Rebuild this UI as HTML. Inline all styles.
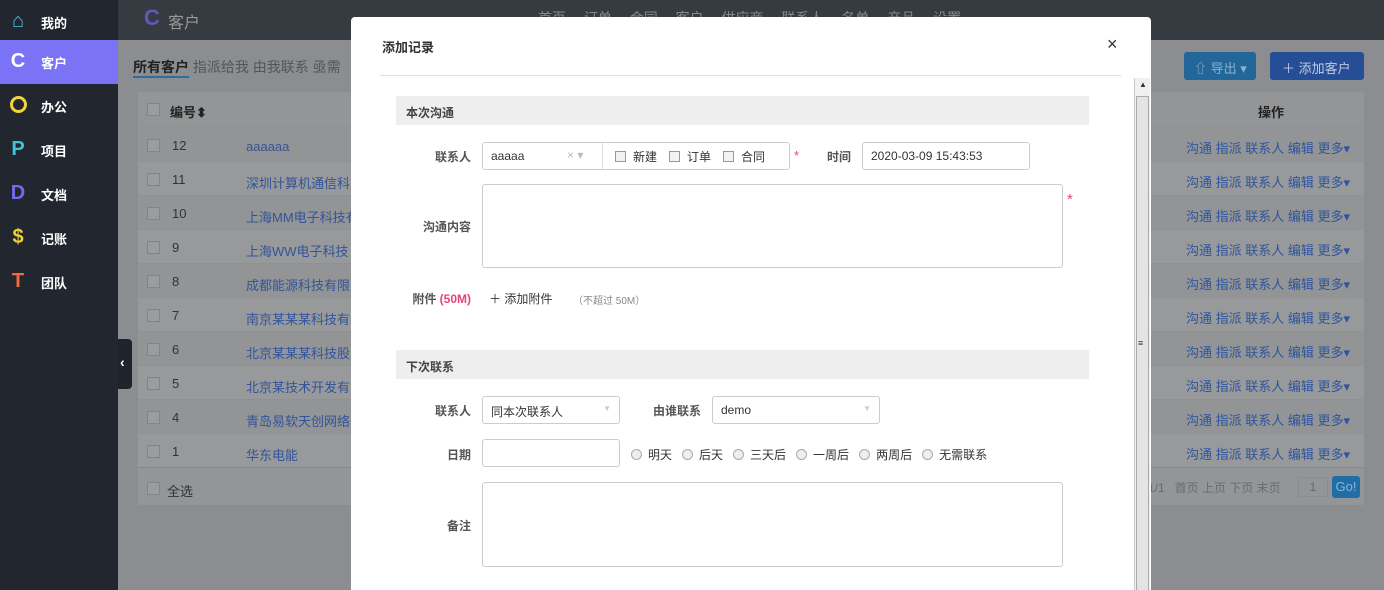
<!DOCTYPE html>
<html><head><meta charset="utf-8"><style>
*{box-sizing:border-box;margin:0;padding:0}
html,body{width:1384px;height:590px;overflow:hidden}
body{position:relative;font-family:"Liberation Sans","Noto Sans CJK SC",sans-serif;font-size:13px;color:#333;background:#8b8d90}
.a{position:absolute}
.side{left:0;top:0;width:118px;height:590px;background:#22262e}
.si{position:absolute;left:0;width:118px;height:44px;color:#fff;font-weight:bold;font-size:13px}
.si span.ic{position:absolute;left:8px;top:10px;font-size:20px;font-weight:bold;width:20px;text-align:center;line-height:22px}
.si span.t{position:absolute;left:41px;top:13px}
.top{left:118px;top:0;width:1266px;height:40px;background:#363b42}
.tbl{left:138px;top:92px;width:1226px;height:413px;background:#97999b;border-radius:3px}
.row{position:absolute;left:0;width:1226px;height:34px;border-top:1px solid #8f9193}
.cb{position:absolute;width:13px;height:13px;border:1px solid #828486;background:#9a9c9e}
.lk{color:#33549a}
.act{position:absolute;right:14px;color:#2f559e;font-size:13px}
.modal{left:351px;top:17px;width:800px;height:573px;background:#fff;border-radius:4px 4px 0 0;overflow:hidden}
.sec{position:absolute;left:45px;width:693px;height:29px;background:#eeeeee;font-weight:bold;font-size:12px;color:#444;padding:8px 10px}
.lbl{position:absolute;font-weight:bold;font-size:12px;color:#555;text-align:right}
.inp{position:absolute;border:1px solid #ccc;border-radius:3px;background:#fff;font-size:12px;color:#333}
.rad{display:inline-block;width:11px;height:11px;border:1px solid #aaa;border-radius:50%;background:#eee;vertical-align:-1px;margin:0 6px 0 10px}
.chk{display:inline-block;width:11px;height:11px;border:1px solid #999;background:#f2f2f2;vertical-align:-1px;margin:0 7px 0 12px}
</style></head><body>
<div class="a side">
<div class="si" style="top:0"><span class="ic" style="color:#4cc2e6">&#8962;</span><span class="t">我的</span></div>
<div class="si" style="top:40px;background:#7a73f6"><span class="ic">C</span><span class="t">客户</span></div>
<div class="si" style="top:84px"><span class="ic" style="top:12px;left:10px;width:17px;height:17px;border:3px solid #f0d43a;border-radius:50%"></span><span class="t">办公</span></div>
<div class="si" style="top:128px"><span class="ic" style="color:#3ec4d8">P</span><span class="t">项目</span></div>
<div class="si" style="top:172px"><span class="ic" style="color:#6e6cf0">D</span><span class="t">文档</span></div>
<div class="si" style="top:216px"><span class="ic" style="color:#f0cf3a">$</span><span class="t">记账</span></div>
<div class="si" style="top:260px"><span class="ic" style="color:#f06a3a">T</span><span class="t">团队</span></div>
</div>
<div class="a" style="left:118px;top:339px;width:14px;height:50px;background:#1f232a;border-radius:0 4px 4px 0;color:#fff;font-size:14px;font-weight:bold;padding:15px 2px">&lsaquo;</div>
<div class="a top"><span class="a" style="left:26px;top:5px;font-size:22px;color:#5d5ab8;font-weight:bold">C</span><span class="a" style="left:50px;top:9px;font-size:16px;color:#999">客户</span>
<span class="a" style="left:420px;top:8px;color:#888;font-size:14px;word-spacing:14px">首页 订单 合同 客户 供应商 联系人 名单 产品 设置</span></div>
<div class="a" style="left:133px;top:57px;font-size:14px;color:#555"><b style="color:#222">所有客户</b> 指派给我 由我联系 亟需</div>
<div class="a" style="left:133px;top:76px;width:56px;height:2px;background:#2e6d9e"></div>
<div class="a" style="left:1184px;top:52px;width:72px;height:28px;background:#22669a;border-radius:3px;color:#8fb0cc;font-size:13px;padding:6px 10px;white-space:nowrap">⇧ 导出 ▾</div>
<div class="a" style="left:1270px;top:52px;width:94px;height:28px;background:#254e96;border-radius:3px;color:#c0cce2;font-size:13px;padding:6px 12px;white-space:nowrap">＋ 添加客户</div>
<div class="a tbl">
<div class="row" style="top:0;height:35px;border:0;background:#939597"><span class="cb" style="left:9px;top:11px"></span><b class="a" style="left:32px;top:10px;color:#222;font-size:13px">编号⬍</b><b class="a" style="right:80px;top:10px;color:#222">操作</b></div>
</div>
<div class="a" style="left:138px;top:127px">
<div class="row" style="top:0;background:#929496"><span class="cb" style="left:9px;top:11px"></span><span class="a" style="left:34px;top:10px">12</span><span class="a lk" style="left:108px;top:11px">aaaaaa</span><span class="act" style="top:10px">沟通 指派 联系人 编辑 更多▾</span></div>
<div class="row" style="top:34px;background:#97999b"><span class="cb" style="left:9px;top:11px"></span><span class="a" style="left:34px;top:10px">11</span><span class="a lk" style="left:108px;top:11px">深圳计算机通信科</span><span class="act" style="top:10px">沟通 指派 联系人 编辑 更多▾</span></div>
<div class="row" style="top:68px;background:#929496"><span class="cb" style="left:9px;top:11px"></span><span class="a" style="left:34px;top:10px">10</span><span class="a lk" style="left:108px;top:11px">上海MM电子科技有</span><span class="act" style="top:10px">沟通 指派 联系人 编辑 更多▾</span></div>
<div class="row" style="top:102px;background:#97999b"><span class="cb" style="left:9px;top:11px"></span><span class="a" style="left:34px;top:10px">9</span><span class="a lk" style="left:108px;top:11px">上海WW电子科技</span><span class="act" style="top:10px">沟通 指派 联系人 编辑 更多▾</span></div>
<div class="row" style="top:136px;background:#929496"><span class="cb" style="left:9px;top:11px"></span><span class="a" style="left:34px;top:10px">8</span><span class="a lk" style="left:108px;top:11px">成都能源科技有限</span><span class="act" style="top:10px">沟通 指派 联系人 编辑 更多▾</span></div>
<div class="row" style="top:170px;background:#97999b"><span class="cb" style="left:9px;top:11px"></span><span class="a" style="left:34px;top:10px">7</span><span class="a lk" style="left:108px;top:11px">南京某某某科技有</span><span class="act" style="top:10px">沟通 指派 联系人 编辑 更多▾</span></div>
<div class="row" style="top:204px;background:#929496"><span class="cb" style="left:9px;top:11px"></span><span class="a" style="left:34px;top:10px">6</span><span class="a lk" style="left:108px;top:11px">北京某某某科技股</span><span class="act" style="top:10px">沟通 指派 联系人 编辑 更多▾</span></div>
<div class="row" style="top:238px;background:#97999b"><span class="cb" style="left:9px;top:11px"></span><span class="a" style="left:34px;top:10px">5</span><span class="a lk" style="left:108px;top:11px">北京某技术开发有</span><span class="act" style="top:10px">沟通 指派 联系人 编辑 更多▾</span></div>
<div class="row" style="top:272px;background:#929496"><span class="cb" style="left:9px;top:11px"></span><span class="a" style="left:34px;top:10px">4</span><span class="a lk" style="left:108px;top:11px">青岛易软天创网络</span><span class="act" style="top:10px">沟通 指派 联系人 编辑 更多▾</span></div>
<div class="row" style="top:306px;background:#97999b"><span class="cb" style="left:9px;top:11px"></span><span class="a" style="left:34px;top:10px">1</span><span class="a lk" style="left:108px;top:11px">华东电能</span><span class="act" style="top:10px">沟通 指派 联系人 编辑 更多▾</span></div>
<div class="row" style="top:340px;height:38px;background:#939597;border-top:1px solid #85878a"><span class="cb" style="left:9px;top:14px"></span><span class="a" style="left:29px;top:13px">全选</span>
<span class="a" style="left:1010px;top:11px;color:#6a6c6e;font-size:12px">1/1 &nbsp;&nbsp;首页 上页 下页 末页</span><span class="a" style="left:1160px;top:9px;width:30px;height:20px;border:1px solid #8a8c8e;text-align:center;color:#666;font-size:12px;padding-top:2px">1</span><span class="a" style="left:1194px;top:8px;width:28px;height:22px;background:#1f6ea8;border-radius:3px;color:#8fb4d2;text-align:center;padding-top:3px">Go!</span></div>
</div>

<div class="a modal">
<b class="a" style="left:31px;top:20px;font-size:13px;color:#333">添加记录</b>
<span class="a" style="left:756px;top:17px;font-size:18px;color:#333">×</span>
<div class="a" style="left:29px;top:58px;width:741px;height:1px;background:#ddd"></div>
<div class="a" style="left:783px;top:61px;width:16px;height:520px;background:#f0f0f0;border-left:1px solid #ccc"><div style="margin:18px 1px 0;height:520px;background:#e4e4e4;border:1px solid #aaa"></div><span class="a" style="left:4px;top:2px;font-size:8px;color:#333">▲</span><span class="a" style="left:3px;top:260px;font-size:9px">≡</span></div>
<div class="sec" style="top:79px">本次沟通</div>
<span class="lbl" style="left:60px;top:131px;width:60px">联系人</span>
<div class="inp" style="left:131px;top:125px;width:308px;height:28px"><span class="a" style="left:8px;top:6px">aaaaa</span><span class="a" style="left:84px;top:5px;color:#bbb">× ▾</span><div class="a" style="left:119px;top:0;width:1px;height:26px;background:#ddd"></div><span class="a" style="left:120px;top:5px;white-space:nowrap"><span class="chk"></span>新建<span class="chk"></span>订单<span class="chk"></span>合同</span></div>
<span class="a" style="left:443px;top:131px;color:#e8417a">*</span>
<span class="lbl" style="left:466px;top:131px;width:34px">时间</span>
<div class="inp" style="left:511px;top:125px;width:168px;height:28px;padding:6px 8px">2020-03-09 15:43:53</div>
<div class="inp" style="left:131px;top:167px;width:581px;height:84px"></div>
<span class="a" style="left:716px;top:174px;color:#e8417a;font-size:15px">*</span>
<span class="lbl" style="left:40px;top:201px;width:80px">沟通内容</span>
<span class="lbl" style="left:40px;top:273px;width:80px">附件 <span style="color:#e8417a">(50M)</span></span>
<span class="a" style="left:138px;top:273px;font-size:12px">＋ 添加附件</span><span class="a" style="left:222px;top:275px;font-size:10px;color:#888">（不超过 50M）</span>
<div class="sec" style="top:333px">下次联系</div>
<span class="lbl" style="left:60px;top:385px;width:60px">联系人</span>
<div class="inp" style="left:131px;top:379px;width:138px;height:28px;padding:6px 8px">同本次联系人<span class="a" style="right:8px;top:7px;color:#ccc;font-size:8px">▼</span></div>
<span class="lbl" style="left:290px;top:385px;width:60px">由谁联系</span>
<div class="inp" style="left:361px;top:379px;width:168px;height:28px;padding:6px 8px">demo<span class="a" style="right:8px;top:7px;color:#ccc;font-size:8px">▼</span></div>
<span class="lbl" style="left:60px;top:429px;width:60px">日期</span>
<div class="inp" style="left:131px;top:422px;width:138px;height:28px"></div>
<span class="a" style="left:270px;top:429px;font-size:12px;white-space:nowrap"><span class="rad"></span>明天<span class="rad"></span>后天<span class="rad"></span>三天后<span class="rad"></span>一周后<span class="rad"></span>两周后<span class="rad"></span>无需联系</span>
<div class="inp" style="left:131px;top:465px;width:581px;height:85px"></div>
<span class="lbl" style="left:60px;top:500px;width:60px">备注</span>
</div>
</body></html>
